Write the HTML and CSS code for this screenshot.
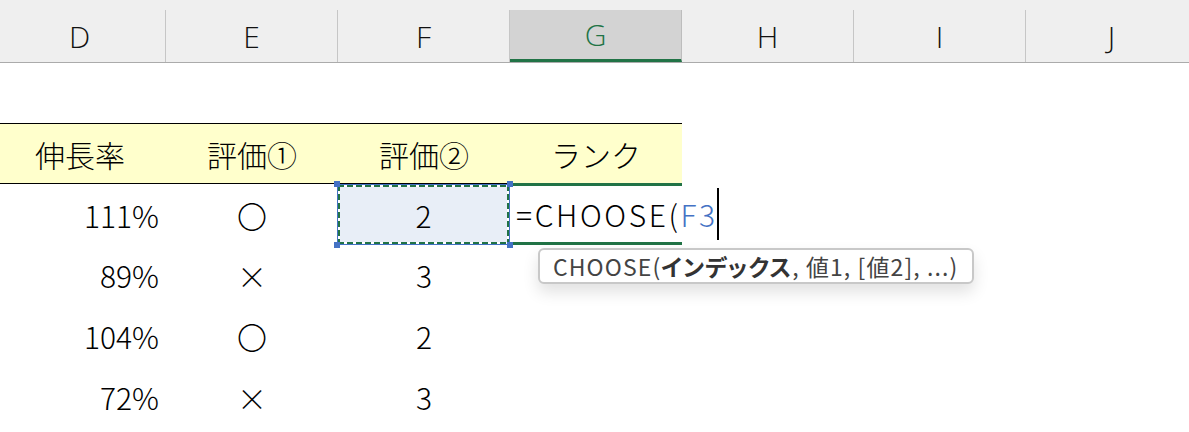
FILE: index.html
```html
<!DOCTYPE html>
<html lang="ja">
<head>
<meta charset="utf-8">
<title>CHOOSE</title>
<link rel="stylesheet" href="styles.css">
</head>
<body>
<div class="app">
  <div class="colheads">
    <div class="ch">D</div>
    <div class="ch">E</div>
    <div class="ch">F</div>
    <div class="ch sel">G</div>
    <div class="ch">H</div>
    <div class="ch">I</div>
    <div class="ch">J</div>
  </div>
  <div class="grid">
    <div class="row r-top"></div>
    <div class="row hdr">
      <div class="c y">伸長率</div>
      <div class="c y">評価①</div>
      <div class="c y">評価②</div>
      <div class="c y">ランク</div>
    </div>
    <div class="row">
      <div class="c num">111%</div>
      <div class="c">〇</div>
      <div class="c ref">2<span class="hd tl"></span><span class="hd tr"></span><span class="hd bl"></span><span class="hd br"></span></div>
      <div class="c edit">=CHOOSE(<span class="blue">F3</span><span class="caret"></span></div>
    </div>
    <div class="row r60">
      <div class="c num">89%</div>
      <div class="c">×</div>
      <div class="c">3</div>
    </div>
    <div class="row">
      <div class="c num">104%</div>
      <div class="c">〇</div>
      <div class="c">2</div>
    </div>
    <div class="row">
      <div class="c num">72%</div>
      <div class="c">×</div>
      <div class="c">3</div>
    </div>
  </div>
  <div class="tip">CHOOSE(<b>インデックス</b>, 値1, [値2], ...)</div>
</div>
</body>
</html>
```
FILE: styles.css
```css
* { box-sizing: border-box; }
body {
  margin: 0;
  background: #fff;
  font-family: "Noto Sans CJK JP", "Noto Sans", sans-serif;
}
.app {
  position: relative;
  width: 1189px;
  height: 432px;
  overflow: hidden;
}
.colheads {
  display: flex;
  height: 63px;
  padding-top: 10px;
  margin-left: -6px;
  background: #efefef;
  border-bottom: 1px solid #ababab;
}
.ch {
  flex: 0 0 172px;
  display: flex;
  align-items: center;
  justify-content: center;
  border-right: 1px solid #c6c6c6;
  font-family: "Open Sans", "Noto Sans", sans-serif;
  font-weight: 300;
  font-size: 30px;
  color: #111;
}
.ch.sel {
  background: #d3d3d3;
  color: #217346;
  border-bottom: 3px solid #217346;
  border-right-color: #bdbdbd;
}
.grid { margin-left: -6px; }
.row { display: flex; height: 61px; }
.row.r-top, .row.r60 { height: 60px; }
.c {
  position: relative;
  flex: 0 0 172px;
  min-width: 0;
  display: flex;
  align-items: center;
  justify-content: center;
  font-size: 30px;
  font-weight: 300;
  color: #000;
  white-space: nowrap;
}
.c.num { justify-content: flex-end; padding-right: 7px; }
.c.y {
  background: #ffffcc;
  border-top: 1px solid #000;
  border-bottom: 1px solid #000;
}
.c.ref {
  background: #e8eef7;
  border: 1px solid #4472c4;
  margin-left: -1px;
  flex-basis: 173px;
}
.c.ref::before {
  content: "";
  position: absolute;
  inset: 0;
  background:
    repeating-linear-gradient(90deg, #217346 0 6px, #fff 6px 9px) left top / 100% 2px no-repeat,
    repeating-linear-gradient(90deg, #217346 0 6px, #fff 6px 9px) left bottom / 100% 2px no-repeat,
    repeating-linear-gradient(180deg, #217346 0 6px, #fff 6px 9px) left top / 2px 100% no-repeat,
    repeating-linear-gradient(180deg, #217346 0 6px, #fff 6px 9px) right top / 2px 100% no-repeat;
}
.hd {
  position: absolute;
  width: 6px;
  height: 6px;
  background: #4472c4;
  z-index: 2;
}
.hd.tl { left: -4px; top: -4px; }
.hd.tr { right: -4px; top: -4px; }
.hd.bl { left: -4px; bottom: -4px; }
.hd.br { right: -4px; bottom: -4px; }
.c.edit {
  justify-content: flex-start;
  padding-left: 6px;
  margin-top: -1px;
  border-top: 3px solid #217346;
  border-bottom: 3px solid #217346;
  background: #fff;
  overflow: visible;
  letter-spacing: 2.6px;
}
.blue { color: #4472c4; }
.caret {
  display: inline-block;
  flex: none;
  width: 2px;
  height: 52px;
  margin-left: -1px;
  background: #000;
}
.tip {
  position: absolute;
  left: 538px;
  top: 248px;
  width: 436px;
  height: 36px;
  padding-left: 13px;
  display: flex;
  align-items: center;
  white-space: nowrap;
  background: #fff;
  border: 2px solid #c8c8c8;
  border-radius: 6px;
  box-shadow: 0 8px 16px rgba(0, 0, 0, 0.12);
  font-size: 23px;
  letter-spacing: 1.1px;
  color: #444;
  font-feature-settings: "palt";
}
.tip b { font-weight: 700; color: #333; }
```
